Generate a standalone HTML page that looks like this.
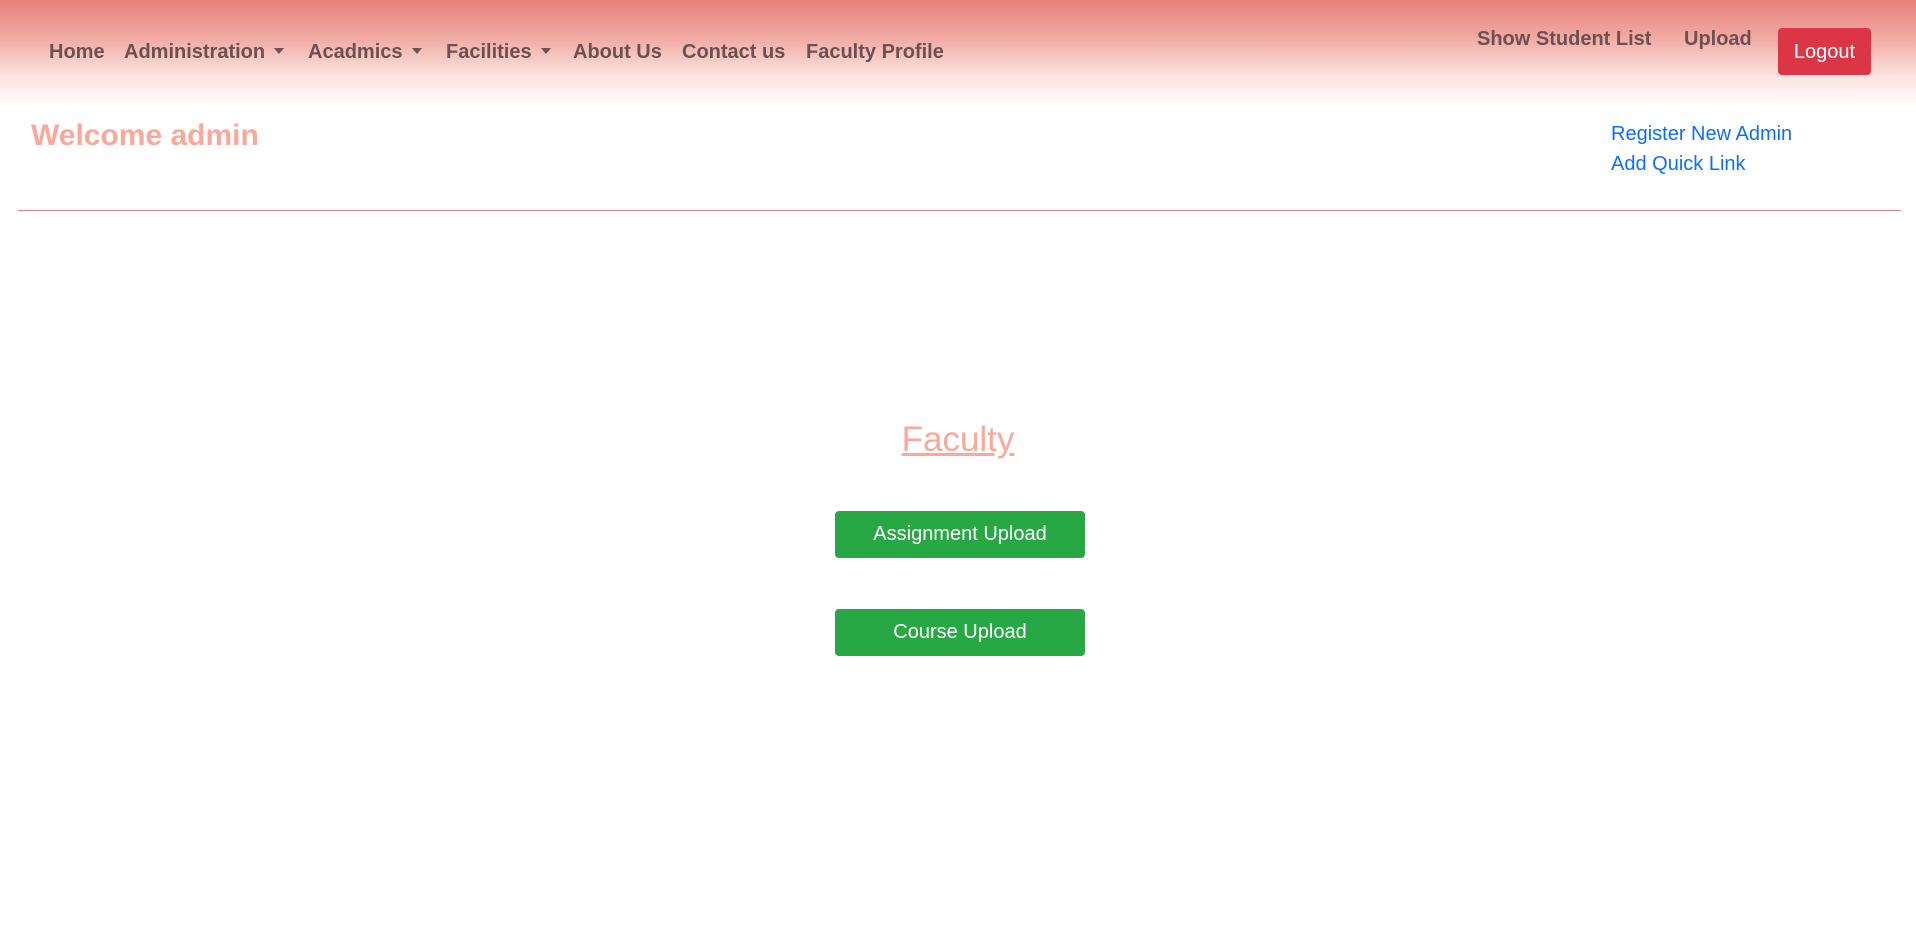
<!DOCTYPE html>
<html><head><meta charset="utf-8"><style>
*{margin:0;padding:0;box-sizing:border-box}
body{width:1916px;height:944px;background:#fff;font-family:"Liberation Sans",sans-serif;position:relative;overflow:hidden}
.nav{position:absolute;left:0;top:0;width:1916px;height:108px;background:linear-gradient(#e8807a 0%,#f0aaa3 35%,#fbe3e0 70%,#fff 100%)}
.n{position:absolute;top:41px;font-size:20px;font-weight:bold;color:#6e5050;white-space:nowrap;line-height:23px}
.c:after{content:"";display:inline-block;margin-left:9px;vertical-align:4px;border-left:5px solid transparent;border-right:5px solid transparent;border-top:6px solid #6e5050}
.logout{position:absolute;left:1778px;top:28px;width:93px;height:47px;background:#dc3545;border-radius:4px;color:#fff;font-size:20px;text-align:center;line-height:49px}
.wel{position:absolute;left:31px;top:119px;font-size:30px;font-weight:bold;color:#f9a899}
.lnk{position:absolute;left:1611px;font-size:20px;color:#0d6efd}
.hr{position:absolute;left:18px;top:210px;width:1883px;height:1px;background:#d9818e}
.fac{position:absolute;left:0;width:1916px;text-align:center;top:420px;font-size:35px;color:#f9a899;text-decoration:underline}
.btn{position:absolute;left:835px;width:250px;height:47px;background:#28a745;border-radius:4px;color:#fff;font-size:20px;text-align:center;line-height:47px}
</style></head><body>
<div class="nav"></div>
<div class="n" style="left:49px">Home</div>
<div class="n c" style="left:124px">Administration</div>
<div class="n c" style="left:308px">Acadmics</div>
<div class="n c" style="left:446px">Facilities</div>
<div class="n" style="left:573px">About Us</div>
<div class="n" style="left:682px">Contact us</div>
<div class="n" style="left:806px">Faculty Profile</div>
<div class="n" style="left:1477px;top:28px">Show Student List</div>
<div class="n" style="left:1684px;top:28px">Upload</div>
<div class="logout">Logout</div>
<div class="wel">Welcome admin</div>
<div class="lnk" style="top:123px">Register New Admin</div>
<div class="lnk" style="top:153px">Add Quick Link</div>
<div class="hr"></div>
<div class="fac">Faculty</div>
<div class="btn" style="top:511px">Assignment Upload</div>
<div class="btn" style="top:609px">Course Upload</div>
</body></html>
